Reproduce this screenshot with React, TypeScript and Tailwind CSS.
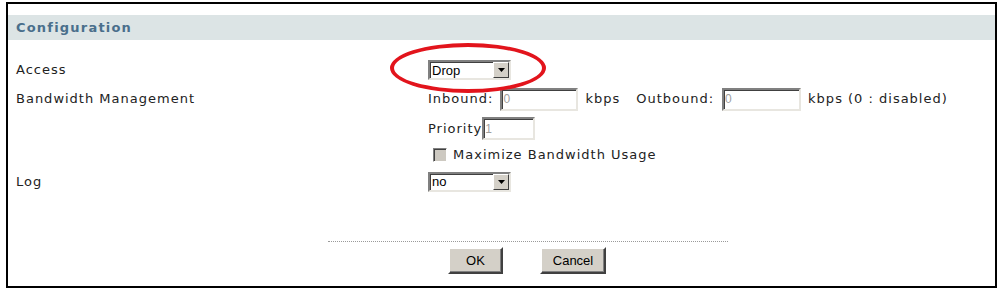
import React from 'react';

const inset =
  'border-2 border-t-[#808080] border-l-[#808080] border-b-[#e8e6e0] border-r-[#e8e6e0] shadow-[inset_1px_1px_0_#404040]';

function Select({ value }: { value: string }) {
  return (
    <div className={`flex h-[20px] w-[83px] items-center bg-white ${inset}`}>
      <span className="flex-1 pl-[2px] font-['Liberation_Sans',Arial,sans-serif] text-[13px] leading-none tracking-normal text-black">
        {value}
      </span>
      <span className="flex h-[16px] w-[16px] items-center justify-center border border-t-white border-l-white border-b-[#404040] border-r-[#404040] bg-[#d4d0c8]">
        <svg width="7" height="4" viewBox="0 0 7 4">
          <path d="M0 0h7L3.5 4z" fill="#000" />
        </svg>
      </span>
    </div>
  );
}

function TextBox({ value, width }: { value: string; width: string }) {
  return (
    <div className={`flex h-[23px] ${width} items-center bg-white ${inset}`}>
      <span className="pl-[1px] font-['Liberation_Sans',Arial,sans-serif] text-[12px] tracking-normal text-[#a0a0a0]">
        {value}
      </span>
    </div>
  );
}

function Button({ label, width }: { label: string; width: string }) {
  return (
    <button
      className={`flex h-[27px] ${width} items-center justify-center border-2 border-t-white border-l-white border-b-[#404040] border-r-[#404040] bg-[#d4d0c8] font-['Liberation_Sans',Arial,sans-serif] text-[13px] tracking-normal text-black shadow-[inset_-1px_-1px_0_#808080]`}
    >
      {label}
    </button>
  );
}

export default function App() {
  return (
    <div className="h-[289px] w-[998px] bg-white pl-[6px] pt-[2px] font-['DejaVu_Sans',Verdana,sans-serif] text-[13px] tracking-[1px] text-[#222]">
      <div className="flex h-[286px] w-[991px] flex-col border-2 border-black bg-white">
        <div className="mt-[11px] flex h-[25px] items-center bg-[#dce4e5] pl-[8px]">
          <span className="text-[13px] font-bold tracking-[1.2px] text-[#4a6f8c]">Configuration</span>
        </div>

        <div className="grid grid-cols-[412px_1fr] pl-[8px]">
          <div className="mt-[18px] flex h-[24px] items-center">Access</div>
          <div className="relative mt-[18px] flex h-[24px] items-center">
            <Select value="Drop" />
            <div className="absolute left-[-38px] top-[-15px] h-[50px] w-[156px] rounded-[50%] border-[4px] border-[#e2141c]" />
          </div>

          <div className="mt-[5px] flex h-[24px] items-center">Bandwidth Management</div>
          <div className="mt-[5px] flex flex-col">
            <div className="flex h-[24px] items-center">
              <span className="mr-[7px]">Inbound:</span>
              <TextBox value="0" width="w-[78px]" />
              <span className="ml-[7px] mr-[16px]">kbps</span>
              <span className="mr-[8px]">Outbound:</span>
              <TextBox value="0" width="w-[79px]" />
              <span className="ml-[7px]">kbps (0 : disabled)</span>
            </div>
            <div className="mt-[6px] flex h-[23px] items-center">
              <span>Priority</span>
              <TextBox value="1" width="w-[53px]" />
            </div>
            <div className="mt-[6px] flex h-[17px] items-center">
              <span className="ml-[5px] mr-[6px] h-[14px] w-[14px] border border-t-[#808080] border-l-[#808080] border-b-white border-r-white bg-[#cdc9c1] shadow-[inset_1px_1px_0_#404040]" />
              <span>Maximize Bandwidth Usage</span>
            </div>
          </div>

          <div className="mt-[8px] flex h-[21px] items-center">Log</div>
          <div className="mt-[8px] flex h-[21px] items-center">
            <Select value="no" />
          </div>
        </div>

        <div className="ml-[320px] mt-[49px] w-[400px] border-t border-dotted border-[#9a9a9a]" />

        <div className="ml-[440px] mt-[5px] flex gap-[37px]">
          <Button label="OK" width="w-[55px]" />
          <Button label="Cancel" width="w-[66px]" />
        </div>
      </div>
    </div>
  );
}
